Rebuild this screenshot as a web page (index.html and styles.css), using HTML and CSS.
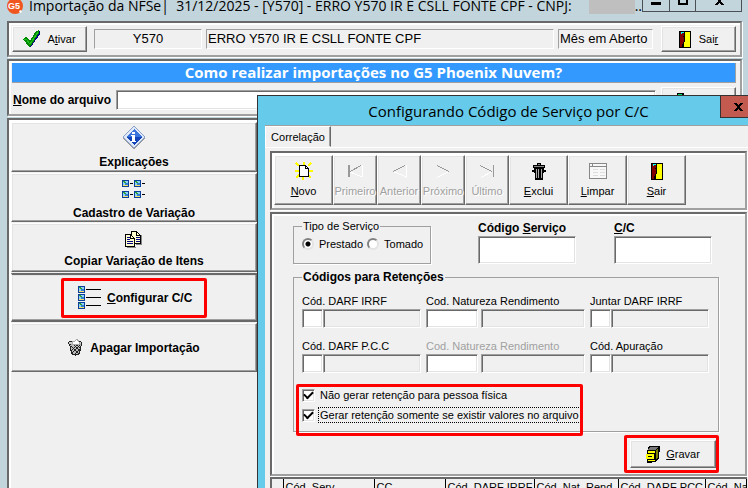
FILE: index.html
```html
<!DOCTYPE html>
<html lang="pt-BR">
<head>
    <meta charset="UTF-8">
    <meta name="viewport" content="width=device-width, initial-scale=1.0">
    <title>Importação da NFSe</title>
    <link rel="stylesheet" href="styles.css">
</head>
<body>
    <!-- icons used more than once -->
    <svg class="sprite" width="0" height="0">
        <symbol id="door" viewBox="0 0 12 17">
            <path d="M0 0h12v17H0z" fill="#000"/>
            <path d="M5 1h6v15H5z" fill="#ff0"/>
            <path d="M1 1h4v11l-2 4H1z" fill="#800000"/>
            <path d="M2 1h3v1H3v1H2z" fill="#0ff"/>
            <path d="M5 1h1v10H5zM4 11h1v2H4zM3 13h1v3H3zM4 5h1v1H4z" fill="#000"/>
        </symbol>
        <symbol id="node" viewBox="0 0 7 7">
            <path d="M0 0h7v7H0z" fill="#0a3f9c"/>
            <path d="M1 1h5v5H1z" fill="#8fd0f5"/>
            <path d="M1 1h2v1H1zM2 2h2v1H2z" fill="#2ea02e"/>
            <path d="M3 3h3v2H3z" fill="#2e7fd0"/>
            <path d="M1 5h5v1H1z" fill="#f4e06a"/>
        </symbol>
    </svg>

    <div class="window">
        <header class="titlebar">
            <svg class="logo" width="16" height="16" viewBox="0 0 16 16">
                <circle cx="8" cy="6" r="8" fill="#f0561f"/>
                <text x="1" y="9" class="logo-text">G5</text>
                <path d="M12 11l2-1 1 2-2 1z" fill="#fff"/>
            </svg>
            <h1>Importação da NFSe|&nbsp; 31/12/2025 - [Y570] - ERRO Y570 IR E CSLL FONTE CPF - CNPJ:</h1>
            <span class="redacted"></span>
            <span class="dots">..</span>
            <div class="win-buttons">
                <button aria-label="Minimizar"><svg width="10" height="11"><path d="M0 2h10v3H0z"/></svg></button>
                <button aria-label="Maximizar"><svg width="10" height="11"><path d="M0 0h2v3h6V0h2v5H0z"/></svg></button>
                <button aria-label="Fechar"><svg width="10" height="11"><path d="M3 0h4L6 1l4 4H7L5 3 3 5H0l4-4z"/></svg></button>
            </div>
        </header>

        <section class="panel status">
            <button class="btn ativar">
                <svg width="18" height="18" viewBox="0 0 18 18">
                    <path d="M1 10l4-1 3 4 6-11 3-1v3L8 17H6z" fill="#000080"/>
                    <path d="M0 9l3-2 4 4 6-10 3-1v3L7 17H6z" fill="#008a00"/>
                    <path d="M1 9l2 0 4 5 8-12" fill="none" stroke="#20c020"/>
                </svg>
                <span>A<u>t</u>ivar</span>
            </button>
            <span class="box code">Y570</span>
            <span class="box company">ERRO Y570 IR E CSLL FONTE CPF</span>
            <span class="box month">Mês em Aberto</span>
            <button class="btn sair">
                <svg width="12" height="17"><use href="#door"/></svg>
                <span>Sai<u>r</u></span>
            </button>
        </section>

        <section class="panel file">
            <a class="banner" href="#">Como realizar importações no G5 Phoenix Nuvem?</a>
            <div class="file-row">
                <label for="arquivo"><u>N</u>ome do arquivo</label>
                <input type="text" id="arquivo">
                <button class="btn open" aria-label="Abrir">
                    <svg width="8" height="14"><path d="M0 0h7v9H0z"/><path d="M1 1h4v4H1z" fill="#00e060"/></svg>
                </button>
            </div>
        </section>

        <section class="panel menu">
            <button class="btn stacked first">
                <svg width="26" height="26" viewBox="0 0 26 26">
                    <path d="M13 2l11 11-11 12L2 13z" fill="#999"/>
                    <path d="M13 1l11 11-11 11L2 12z" fill="#dfe8f7" stroke="#8ba0c8"/>
                    <path d="M13 4l8 8-8 8-8-8z" fill="#1243b8"/>
                    <path d="M13 4l8 8h-16z" fill="#3a74dc"/>
                    <path d="M11 7h3v2h-3zM10 10h4v6h1v1h-5v-1h1v-5h-1z" fill="#fff"/>
                </svg>
                <span>Explicações</span>
            </button>
            <button class="btn stacked">
                <svg width="24" height="26" viewBox="0 0 24 26">
                    <use href="#node" x="0" y="4" width="7" height="7"/>
                    <use href="#node" x="12" y="4" width="7" height="7"/>
                    <use href="#node" x="0" y="15" width="7" height="7"/>
                    <use href="#node" x="12" y="15" width="7" height="7"/>
                    <path d="M8 7h3v1H8zM20 7h3v1h-3zM8 18h3v1H8zM20 18h3v1h-3z"/>
                </svg>
                <span>Cadastro de Variação</span>
            </button>
            <button class="btn stacked">
                <svg width="18" height="22" viewBox="0 0 18 22">
                    <path d="M2 19h9v1H2zM11 16h6v1h-6zM16 7h1v10h-1z" fill="#888"/>
                    <path d="M6.500 3.500h5l4 4v8h-9z" fill="#ffffd0" stroke="#000"/>
                    <path d="M11.500 3.500v4h4" fill="none" stroke="#000"/>
                    <path d="M.5 6.500h5l4 4v8h-9z" fill="#ffffd0" stroke="#000"/>
                    <path d="M5.500 6.500v4h4" fill="none" stroke="#000"/>
                    <path d="M2 9h3v1H2zM2 11h3v1H2zM2 13h6v1H2zM2 15h6v1H2zM11 9h4v1h-4zM11 11h4v1h-4zM11 13h4v1h-4z" fill="#000080"/>
                </svg>
                <span>Copiar Variação de Itens</span>
            </button>
            <button class="btn focused">
                <span class="mark">
                    <svg width="24" height="24" viewBox="0 0 24 24">
                        <use href="#node" x="0" y="0" width="7" height="7"/>
                        <use href="#node" x="0" y="8" width="7" height="7"/>
                        <use href="#node" x="0" y="16" width="7" height="7"/>
                        <path d="M8 3h15v1H8zM8 11h15v1H8zM8 19h15v1H8z"/>
                    </svg>
                    <span><u>C</u>onfigurar C/C</span>
                </span>
            </button>
            <button class="btn">
                <svg width="16" height="18" viewBox="0 0 16 18">
                    <path d="M1.500 4.500l2 10q4 3 8 0l2-10z" fill="#bbb" stroke="#222"/>
                    <path d="M3 7l8 8M6 6l6 6M9 6l3 3M12 6l-8 8M9 6l-6 6M12 10l-6 6" stroke="#222" fill="none"/>
                    <ellipse cx="7" cy="4" rx="7" ry="2" fill="#ccc" stroke="#222"/>
                    <path d="M4 5l1-3 2 0 2-2 2 3 1 2z" fill="#fff" stroke="#aaa" stroke-width="1"/>
                </svg>
                <span>Apagar Importação</span>
            </button>
        </section>
    </div>

    <div class="dialog" role="dialog" aria-labelledby="dialog-title">
        <header class="dialog-bar">
            <h2 id="dialog-title">Configurando Código de Serviço por C/C</h2>
            <button class="close" aria-label="Fechar"><svg width="10" height="8"><path d="M0 0h3l2 2 2-2h3L6 4l4 4H7L5 6 3 8H0l4-4z"/></svg></button>
        </header>
        <div class="dialog-body">
            <div class="tabs"><button class="tab">Correlação</button></div>
            <div class="page">
                <div class="panel toolbar">
                    <button class="btn wide">
                        <svg width="18" height="18" viewBox="0 0 18 18">
                            <path d="M1 1l3 3M9 0v3M16 1l-3 3M0 9h4M14 9h4M1 16l4-4M8 14v4M16 16l-3-3" stroke="#ff0" stroke-width="2"/>
                            <path d="M4.500 3.500h6l3 3v8h-9z" fill="#fff" stroke="#000" stroke-width="1"/>
                            <path d="M10.500 3.500v3h3" fill="none" stroke="#000"/>
                        </svg>
                        <span><u>N</u>ovo</span>
                    </button>
                    <button class="btn" disabled>
                        <svg width="18" height="18" viewBox="0 0 18 18"><path d="M16 3v12M4 10l12 5" stroke="#fff" fill="none"/><path d="M2 3h2v12H2z" fill="#999"/><path d="M15 3.500L4 9.500" stroke="#999" fill="none"/></svg>
                        <span>Primeiro</span>
                    </button>
                    <button class="btn" disabled>
                        <svg width="18" height="18" viewBox="0 0 18 18"><path d="M16.500 3v12l-12-5" stroke="#fff" fill="none"/><path d="M15 3.500L3 9.500" stroke="#999" fill="none"/></svg>
                        <span>Anterior</span>
                    </button>
                    <button class="btn" disabled>
                        <svg width="18" height="18" viewBox="0 0 18 18"><path d="M15 9.500L3 15.500" stroke="#fff" fill="none"/><path d="M3 3.500l12 6" stroke="#999" fill="none"/></svg>
                        <span>Próximo</span>
                    </button>
                    <button class="btn" disabled>
                        <svg width="18" height="18" viewBox="0 0 18 18"><path d="M14 9.500L3 15.500" stroke="#fff" fill="none"/><path d="M2 3.500l12 6M15.500 3v12" stroke="#999" fill="none"/></svg>
                        <span>Último</span>
                    </button>
                    <button class="btn wide">
                        <svg width="14" height="18" viewBox="0 0 14 18">
                            <path d="M5 1h4v2H5zM1 3h12v3H1zM2 6h10v5H2zM3 10h8v8H3zM0 8h2v2H0zM12 8h2v2h-2z"/>
                            <path d="M2 4h10v1H2zM6 2h2v1H6z" fill="#888"/>
                            <path d="M4 7h1v9H4zM6 7h1v9H6zM9 7h1v9H9z" fill="#aaa"/>
                        </svg>
                        <span><u>E</u>xclui</span>
                    </button>
                    <button class="btn wide">
                        <svg width="18" height="18" viewBox="0 0 18 18">
                            <path d="M.5 1.500h17v15H.5z" fill="#f8f8f8" stroke="#888"/>
                            <path d="M0 4.500h18M3.500 1v4" stroke="#888"/>
                            <path d="M4 7.500h5M4 10.500h5M4 13.500h5M11 7.500h5M11 10.500h5M11 13.500h5" stroke="#ddd"/>
                        </svg>
                        <span><u>L</u>impar</span>
                    </button>
                    <button class="btn wide">
                        <svg width="18" height="18" viewBox="0 0 18 18"><use href="#door" x="3" y="1" width="12" height="17"/></svg>
                        <span><u>S</u>air</span>
                    </button>
                </div>

                <form class="panel form">
                    <div class="top-fields">
                        <fieldset class="tipo">
                            <legend>Tipo de Serviço</legend>
                            <label><input type="radio" name="tipo" checked> Prestado</label>
                            <label><input type="radio" name="tipo"> Tomado</label>
                        </fieldset>
                        <div class="big-field">
                            <label for="servico">Código <u>S</u>erviço</label>
                            <input type="text" id="servico">
                        </div>
                        <div class="big-field">
                            <label for="cc"><u>C</u>/C</label>
                            <input type="text" id="cc">
                        </div>
                    </div>

                    <fieldset class="retencoes">
                        <legend>Códigos para Retenções</legend>
                        <div class="fields">
                            <div class="field">
                                <label for="irrf">Cód. DARF IRRF</label>
                                <div class="pair"><input type="text" id="irrf"><input type="text" readonly aria-label="Descrição DARF IRRF"></div>
                            </div>
                            <div class="field natureza">
                                <label for="nat1">Cod. Natureza Rendimento</label>
                                <div class="pair"><input type="text" id="nat1"><input type="text" readonly aria-label="Descrição da natureza"></div>
                            </div>
                            <div class="field">
                                <label for="juntar">Juntar DARF IRRF</label>
                                <div class="pair"><input type="text" id="juntar"><input type="text" readonly aria-label="Descrição juntar"></div>
                            </div>
                            <div class="field">
                                <label for="pcc">Cód. DARF P.C.C</label>
                                <div class="pair"><input type="text" id="pcc"><input type="text" readonly aria-label="Descrição DARF P.C.C"></div>
                            </div>
                            <div class="field natureza off">
                                <label for="nat2">Cod. Natureza Rendimento</label>
                                <div class="pair"><input type="text" id="nat2"><input type="text" readonly aria-label="Descrição da natureza P.C.C"></div>
                            </div>
                            <div class="field">
                                <label for="apuracao">Cód. Apuração</label>
                                <div class="pair"><input type="text" id="apuracao"><input type="text" readonly aria-label="Descrição apuração"></div>
                            </div>
                        </div>
                        <div class="checks">
                            <label><input type="checkbox" checked><span>Não gerar retenção para pessoa física</span></label>
                            <label class="current"><input type="checkbox" checked><span>Gerar retenção somente se existir valores no arquivo</span></label>
                        </div>
                    </fieldset>

                    <div class="actions">
                        <button type="button" class="btn gravar">
                            <svg width="14" height="17" viewBox="0 0 14 17">
                                <path d="M3 0h11l-1 12-3 4-9 1V5z"/>
                                <path d="M4 1h8l-2 3H2z" fill="#777"/>
                                <path d="M10 5l2-3v9l-2 3z" fill="#808000"/>
                                <path d="M2 5h7v2H2zM0 8h8v5H0zM2 14h7v1H2z" fill="#ff0"/>
                                <path d="M2 10h4v1H2z"/>
                            </svg>
                            <span><u>G</u>ravar</span>
                        </button>
                    </div>
                </form>

                <table class="grid">
                    <thead>
                        <tr>
                            <th class="c-mark"></th>
                            <th class="c-serv">Cód. Serv</th>
                            <th class="c-cc">CC</th>
                            <th class="c-irrf">Cód. DARF IRRF</th>
                            <th class="c-nat">Cód. Nat. Rend.</th>
                            <th class="c-pcc">Cód. DARF PCC</th>
                            <th>Cód. Nat. Rend.</th>
                        </tr>
                    </thead>
                </table>
            </div>
        </div>
    </div>
</body>
</html>
```
FILE: styles.css
```css
* {
    box-sizing: border-box;
}
body {
    margin: 0;
    height: 100vh;
    overflow: hidden;
    position: relative;
    background: #c3d5dc;
    color: #000;
    font: 11px/14px "Liberation Sans", Arial, sans-serif;
}
button, input {
    font: inherit;
    color: inherit;
    margin: 0;
}
svg {
    flex: none;
    shape-rendering: crispEdges;
}
.sprite {
    position: absolute;
}
h1, h2, .dots {
    margin: 0;
    font: 14px/12px "Open Sans", sans-serif;
    white-space: nowrap;
}

/* main window */
.window {
    display: flex;
    flex-direction: column;
    height: 100%;
    padding: 0 6px 0 7px;
}
.titlebar {
    display: flex;
    align-items: flex-start;
    height: 21px;
    flex: none;
}
.titlebar h1 {
    margin-left: 6px;
}
.logo {
    shape-rendering: auto;
}
.logo-text {
    font: bold 9px "Liberation Sans", sans-serif;
    fill: #fff;
}
.redacted {
    width: 46px;
    height: 14px;
    flex: none;
    margin-left: auto;
    background: #bfbfbf;
}
.win-buttons {
    display: flex;
    flex: none;
    height: 12px;
    border: 1px solid #4a5054;
    border-top: 0;
}
.win-buttons button {
    display: flex;
    justify-content: center;
    width: 26px;
    padding: 0;
    border: 0;
    background: none;
}
.win-buttons button + button {
    border-left: 1px solid #4a5054;
}
.win-buttons button:last-child {
    width: 46px;
}

/* bevelled controls */
.panel {
    background: #f0f0f0;
    border: 2px solid;
    border-color: #696969 #a0a0a0 #a0a0a0 #696969;
    box-shadow: inset 2px 2px #fff, 1px 1px #fff;
}
.btn {
    display: flex;
    align-items: center;
    justify-content: center;
    gap: 6px;
    padding: 0;
    background: #f0f0f0;
    border: 1px solid;
    border-color: #fff #696969 #696969 #fff;
    box-shadow: inset -1px -1px #a0a0a0, inset 1px 1px #e3e3e3;
    white-space: nowrap;
}
input[type=text] {
    min-width: 0;
    padding: 0 2px;
    background: #fff;
    border: 1px solid;
    border-color: #a0a0a0 #fff #fff #a0a0a0;
    border-radius: 0;
    box-shadow: inset 1px 1px #696969, inset -1px -1px #e3e3e3;
    outline: 0;
}
input[readonly] {
    background: #f0f0f0;
}

.status {
    display: flex;
    align-items: center;
    height: 36px;
    flex: none;
    padding: 2px 4px 2px 3px;
    margin-bottom: 2px;
}
.status .btn {
    height: 26px;
    width: 75px;
}
.status .sair {
    gap: 8px;
}
.box {
    height: 20px;
    padding: 0 1px;
    border: 1px solid;
    border-color: #a0a0a0 #fff #fff #a0a0a0;
    font-size: 13px;
    line-height: 18px;
    white-space: nowrap;
}
.code {
    width: 108px;
    margin-left: 7px;
    text-align: center;
}
.company {
    flex: 1;
    margin: 0 4px;
}
.month {
    width: 95px;
    margin-right: 8px;
}

.file {
    height: 57px;
    flex: none;
    padding: 2px 4px 0 3px;
    margin-bottom: 2px;
}
.banner {
    display: block;
    height: 20px;
    background: #3399ff;
    border-right: 1px solid #a0a0a0;
    border-bottom: 1px solid #a0a0a0;
    color: #fff;
    font: bold 15px/19px "Open Sans", sans-serif;
    text-align: center;
    text-decoration: none;
}
.file-row {
    display: flex;
    align-items: center;
    padding-top: 4px;
}
.file-row label {
    width: 104px;
    padding-left: 1px;
}
.file-row input {
    flex: 1;
    height: 20px;
    margin-right: 5px;
}
.open {
    width: 75px;
    height: 26px;
    padding-right: 36px;
}

.file-row label, .menu, .big-field label, .retencoes legend {
    font-size: 12px;
    font-weight: bold;
}

.menu {
    flex: 1;
    padding: 2px 0 0 2px;
    border-bottom: 0;
    display: flex;
    flex-direction: column;
    gap: 1px;
}
.menu .btn {
    width: 246px;
    height: 49px;
}
.menu .first {
    height: 50px;
}
.menu .stacked {
    flex-direction: column;
    gap: 4px;
}
.menu .focused {
    border-bottom-width: 2px;
    border-top: 2px solid #696969;
}
.mark {
    display: flex;
    align-items: center;
    gap: 5px;
    width: 146px;
    height: 40px;
    padding-left: 14px;
    border: 3px solid #f00;
    border-radius: 2px;
}

/* dialog over the main window */
.dialog {
    position: absolute;
    top: 95px;
    left: 257px;
    right: 0;
    bottom: 0;
    display: flex;
    flex-direction: column;
    overflow: hidden;
    padding-left: 7px;
    background: #66cbea;
    border: 1px solid #333;
    border-width: 1px 0 0 1px;
}
.dialog-bar {
    display: flex;
    align-items: flex-start;
    height: 29px;
    flex: none;
}
.dialog-bar h2 {
    flex: 1;
    padding-left: 32px;
    font-size: 15px;
    line-height: 30px;
    text-align: center;
}
.close {
    display: flex;
    align-items: center;
    justify-content: center;
    width: 28px;
    height: 22px;
    padding: 0 0 0 6px;
    background: #c35a50;
    border: 1px solid #333;
    border-width: 0 0 1px 1px;
}
.dialog-body {
    flex: 1;
    min-height: 0;
    background: #f0f0f0;
    border-top: 1px solid #a0a0a0;
}
.tab {
    width: 66px;
    height: 21px;
    padding: 0;
    display: block;
    background: #f0f0f0;
    border: 1px solid;
    border-color: #fff #696969 #f0f0f0 #fff;
    box-shadow: inset -1px 0 #a0a0a0;
}
.page {
    padding: 3px 1px 0 5px;
    border-top: 1px solid #fff;
    display: flex;
    flex-direction: column;
}
.toolbar {
    display: flex;
    height: 59px;
    padding: 2px 0 2px 2px;
    margin-bottom: 2px;
}
.toolbar .btn {
    flex-direction: column;
    gap: 4px;
    width: 44px;
    height: 50px;
}
.toolbar .wide {
    width: 59px;
}
.btn:disabled {
    color: #a0a0a0;
    text-shadow: 1px 1px #fff;
}

.form {
    height: 264px;
    padding: 2px 26px 2px 21px;
}
fieldset {
    margin: 0;
    min-width: 0;
    border: 1px solid #a0a0a0;
    box-shadow: 1px 1px #fff;
}
legend {
    padding: 0 1px;
}
.top-fields {
    display: flex;
    align-items: flex-end;
    height: 48px;
}
.tipo {
    display: flex;
    width: 138px;
    height: 45px;
    padding: 4px 0 0 8px;
}
.tipo label {
    display: flex;
    align-items: center;
    gap: 5px;
    height: 14px;
    margin-right: 4px;
}
input[type=radio] {
    appearance: none;
    width: 12px;
    height: 12px;
    background: #fff;
    border: 2px solid;
    border-color: #808080 #e3e3e3 #e3e3e3 #808080;
    border-radius: 50%;
}
input[type=radio]:checked {
    background: radial-gradient(#000 2px, #fff 3px);
}
.big-field {
    width: 98px;
    margin-left: 47px;
}
.big-field + .big-field {
    margin-left: 38px;
}
.big-field label {
    display: block;
    line-height: 16px;
}
.big-field input {
    display: block;
    width: 100%;
    height: 28px;
}
.retencoes {
    height: 162px;
    margin-top: 6px;
    padding: 10px 9px 0 8px;
}
.fields {
    display: grid;
    grid-template-columns: 119px 159px 119px;
    column-gap: 5px;
    row-gap: 11px;
}
.field label {
    display: block;
    height: 15px;
    white-space: nowrap;
}
.pair {
    display: flex;
}
.pair input {
    width: 21px;
    height: 19px;
}
.pair input[readonly] {
    flex: 1;
}
.natureza .pair {
    gap: 3px;
}
.natureza .pair input {
    width: 52px;
}
.off {
    color: #a0a0a0;
}
.checks {
    position: relative;
    width: 275px;
    margin-top: 12px;
}
.checks label {
    display: flex;
    align-items: center;
    gap: 4px;
    height: 20px;
    white-space: nowrap;
}
.checks label span {
    padding: 0 1px;
}
.checks .current span {
    outline: 1px dotted #000;
}
.checks::after, .actions::after {
    content: "";
    position: absolute;
    inset: -1px -6px -11px -6px;
    border: 3px solid #f00;
    border-radius: 2px;
    pointer-events: none;
}
input[type=checkbox] {
    appearance: none;
    width: 13px;
    height: 13px;
    flex: none;
    background: #fff;
    border: 1px solid;
    border-color: #a0a0a0 #fff #fff #a0a0a0;
    box-shadow: inset 1px 1px #696969, inset -1px -1px #e3e3e3;
    display: grid;
    place-items: center;
}
input[type=checkbox]:checked::before {
    content: "";
    width: 7px;
    height: 4px;
    border: 2px solid #000;
    border-width: 0 0 2px 2px;
    transform: translateY(-1px) rotate(-45deg);
}
.actions {
    position: relative;
    width: 86px;
    margin: 8px 3px 0 auto;
}
.actions::after {
    inset: -5px -3px -5px -6px;
}
.gravar {
    width: 100%;
    height: 28px;
}

.grid {
    width: 100%;
    margin-top: 1px;
    border-collapse: collapse;
    table-layout: fixed;
    border-top: 2px solid #696969;
    border-left: 2px solid #696969;
}
.grid th {
    height: 16px;
    padding: 0 2px;
    border-right: 1px solid #000;
    font-weight: normal;
    text-align: left;
    white-space: nowrap;
    overflow: hidden;
}
.c-mark {
    width: 12px;
}
.c-serv {
    width: 91px;
}
.c-cc {
    width: 71px;
}
.c-irrf {
    width: 89px;
}
.c-nat {
    width: 84px;
}
.c-pcc {
    width: 87px;
}
```
